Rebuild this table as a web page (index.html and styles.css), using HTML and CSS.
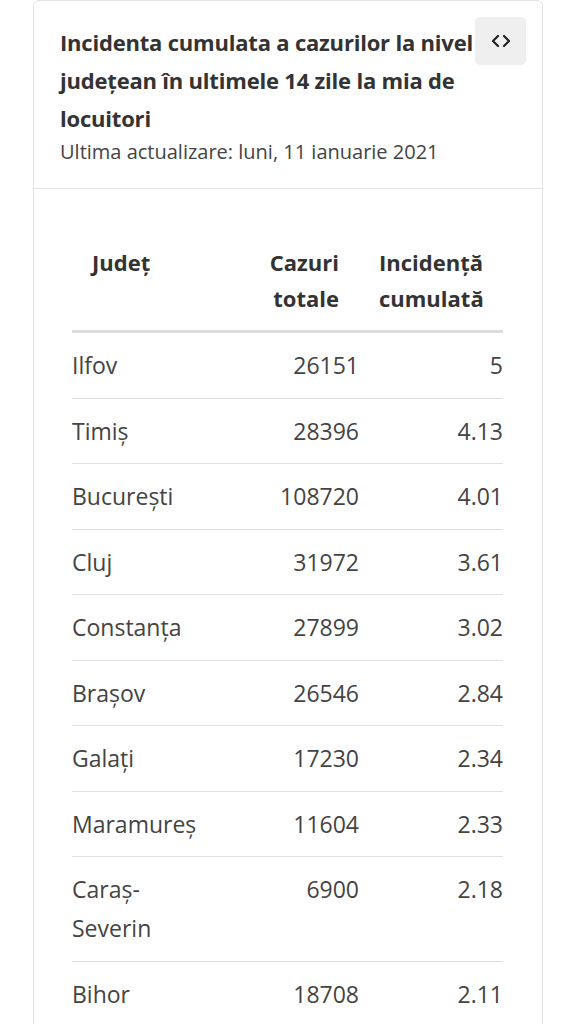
FILE: index.html
```html
<!DOCTYPE html>
<html lang="ro">
<head>
<meta charset="utf-8">
<link rel="stylesheet" href="styles.css">
</head>
<body>
<div class="card">
  <div class="card-head">
    <h2 class="title">Incidenta cumulata a cazurilor la nivel județean în ultimele 14 zile la mia de locuitori</h2>
    <div class="updated">Ultima actualizare: luni, 11 ianuarie 2021</div>
    <button class="embed" aria-label="embed">
      <svg width="20" height="14" viewBox="0 0 20 14"><path d="M7 2 L2 7 L7 12 M13 2 L18 7 L13 12" fill="none" stroke="#222" stroke-width="2.2" stroke-linecap="round" stroke-linejoin="round"/></svg>
    </button>
  </div>
  <div class="card-body">
    <table class="data">
      <colgroup>
        <col class="w1"><col class="w2"><col class="w3">
      </colgroup>
      <thead>
        <tr><th class="c1">Județ</th><th class="c2">Cazuri totale</th><th class="c3">Incidență cumulată</th></tr>
      </thead>
      <tbody>
        <tr><td>Ilfov</td><td class="num">26151</td><td class="num">5</td></tr>
        <tr><td>Timiș</td><td class="num">28396</td><td class="num">4.13</td></tr>
        <tr><td>București</td><td class="num">108720</td><td class="num">4.01</td></tr>
        <tr><td>Cluj</td><td class="num">31972</td><td class="num">3.61</td></tr>
        <tr><td>Constanța</td><td class="num">27899</td><td class="num">3.02</td></tr>
        <tr><td>Brașov</td><td class="num">26546</td><td class="num">2.84</td></tr>
        <tr><td>Galați</td><td class="num">17230</td><td class="num">2.34</td></tr>
        <tr><td>Maramureș</td><td class="num">11604</td><td class="num">2.33</td></tr>
        <tr><td>Caraș-Severin</td><td class="num">6900</td><td class="num">2.18</td></tr>
        <tr><td>Bihor</td><td class="num">18708</td><td class="num">2.11</td></tr>
      </tbody>
    </table>
  </div>
</div>
</body>
</html>
```
FILE: styles.css
```css
html, body {
  margin: 0;
  padding: 0;
  background: #ffffff;
}
body {
  font-family: "Open Sans", "Noto Sans", sans-serif;
  color: #444;
  padding: 0 32px 0 33px;
}
.card {
  border: 1px solid #e3e3e3;
  border-radius: 6px;
  height: 1100px;
  box-sizing: border-box;
}
.card-head {
  position: relative;
  padding: 22px 60px 23px 26px;
  border-bottom: 1px solid #e3e3e3;
}
.title {
  margin: 0;
  font-size: 22px;
  line-height: 38px;
  font-weight: 700;
  color: #333;
  letter-spacing: -0.2px;
  margin-right: -20px;
}
.updated {
  margin-top: 2px;
  font-size: 20px;
  line-height: 26px;
  color: #444;
  letter-spacing: 0;
}
.embed {
  position: absolute;
  top: 16px;
  right: 16px;
  width: 51px;
  height: 48px;
  border: 0;
  border-radius: 5px;
  background: #efefef;
  display: flex;
  align-items: center;
  justify-content: center;
  padding: 0;
}
.card-body {
  padding: 55px 38px 0 38px;
}
.data {
  border-collapse: collapse;
  table-layout: fixed;
  width: 431px;
  font-size: 23px;
}
.w1 { width: 130px; }
.w2 { width: 157px; }
.w3 { width: 144px; }
.data th {
  font-weight: 700;
  font-size: 22px;
  color: #333;
  line-height: 36px;
  padding: 0 20px 14px 20px;
  border-bottom: 3px solid #dcdcdc;
  vertical-align: top;
}
.c1 { text-align: left; }
.c2 { text-align: right; }
.c3 { text-align: right; padding-right: 20px; }
.data td {
  padding: 13px 0 12.5px 0;
  line-height: 39px;
  border-bottom: 1px solid #e0e0e0;
  vertical-align: top;
}
.data td.num { text-align: right; }
```
